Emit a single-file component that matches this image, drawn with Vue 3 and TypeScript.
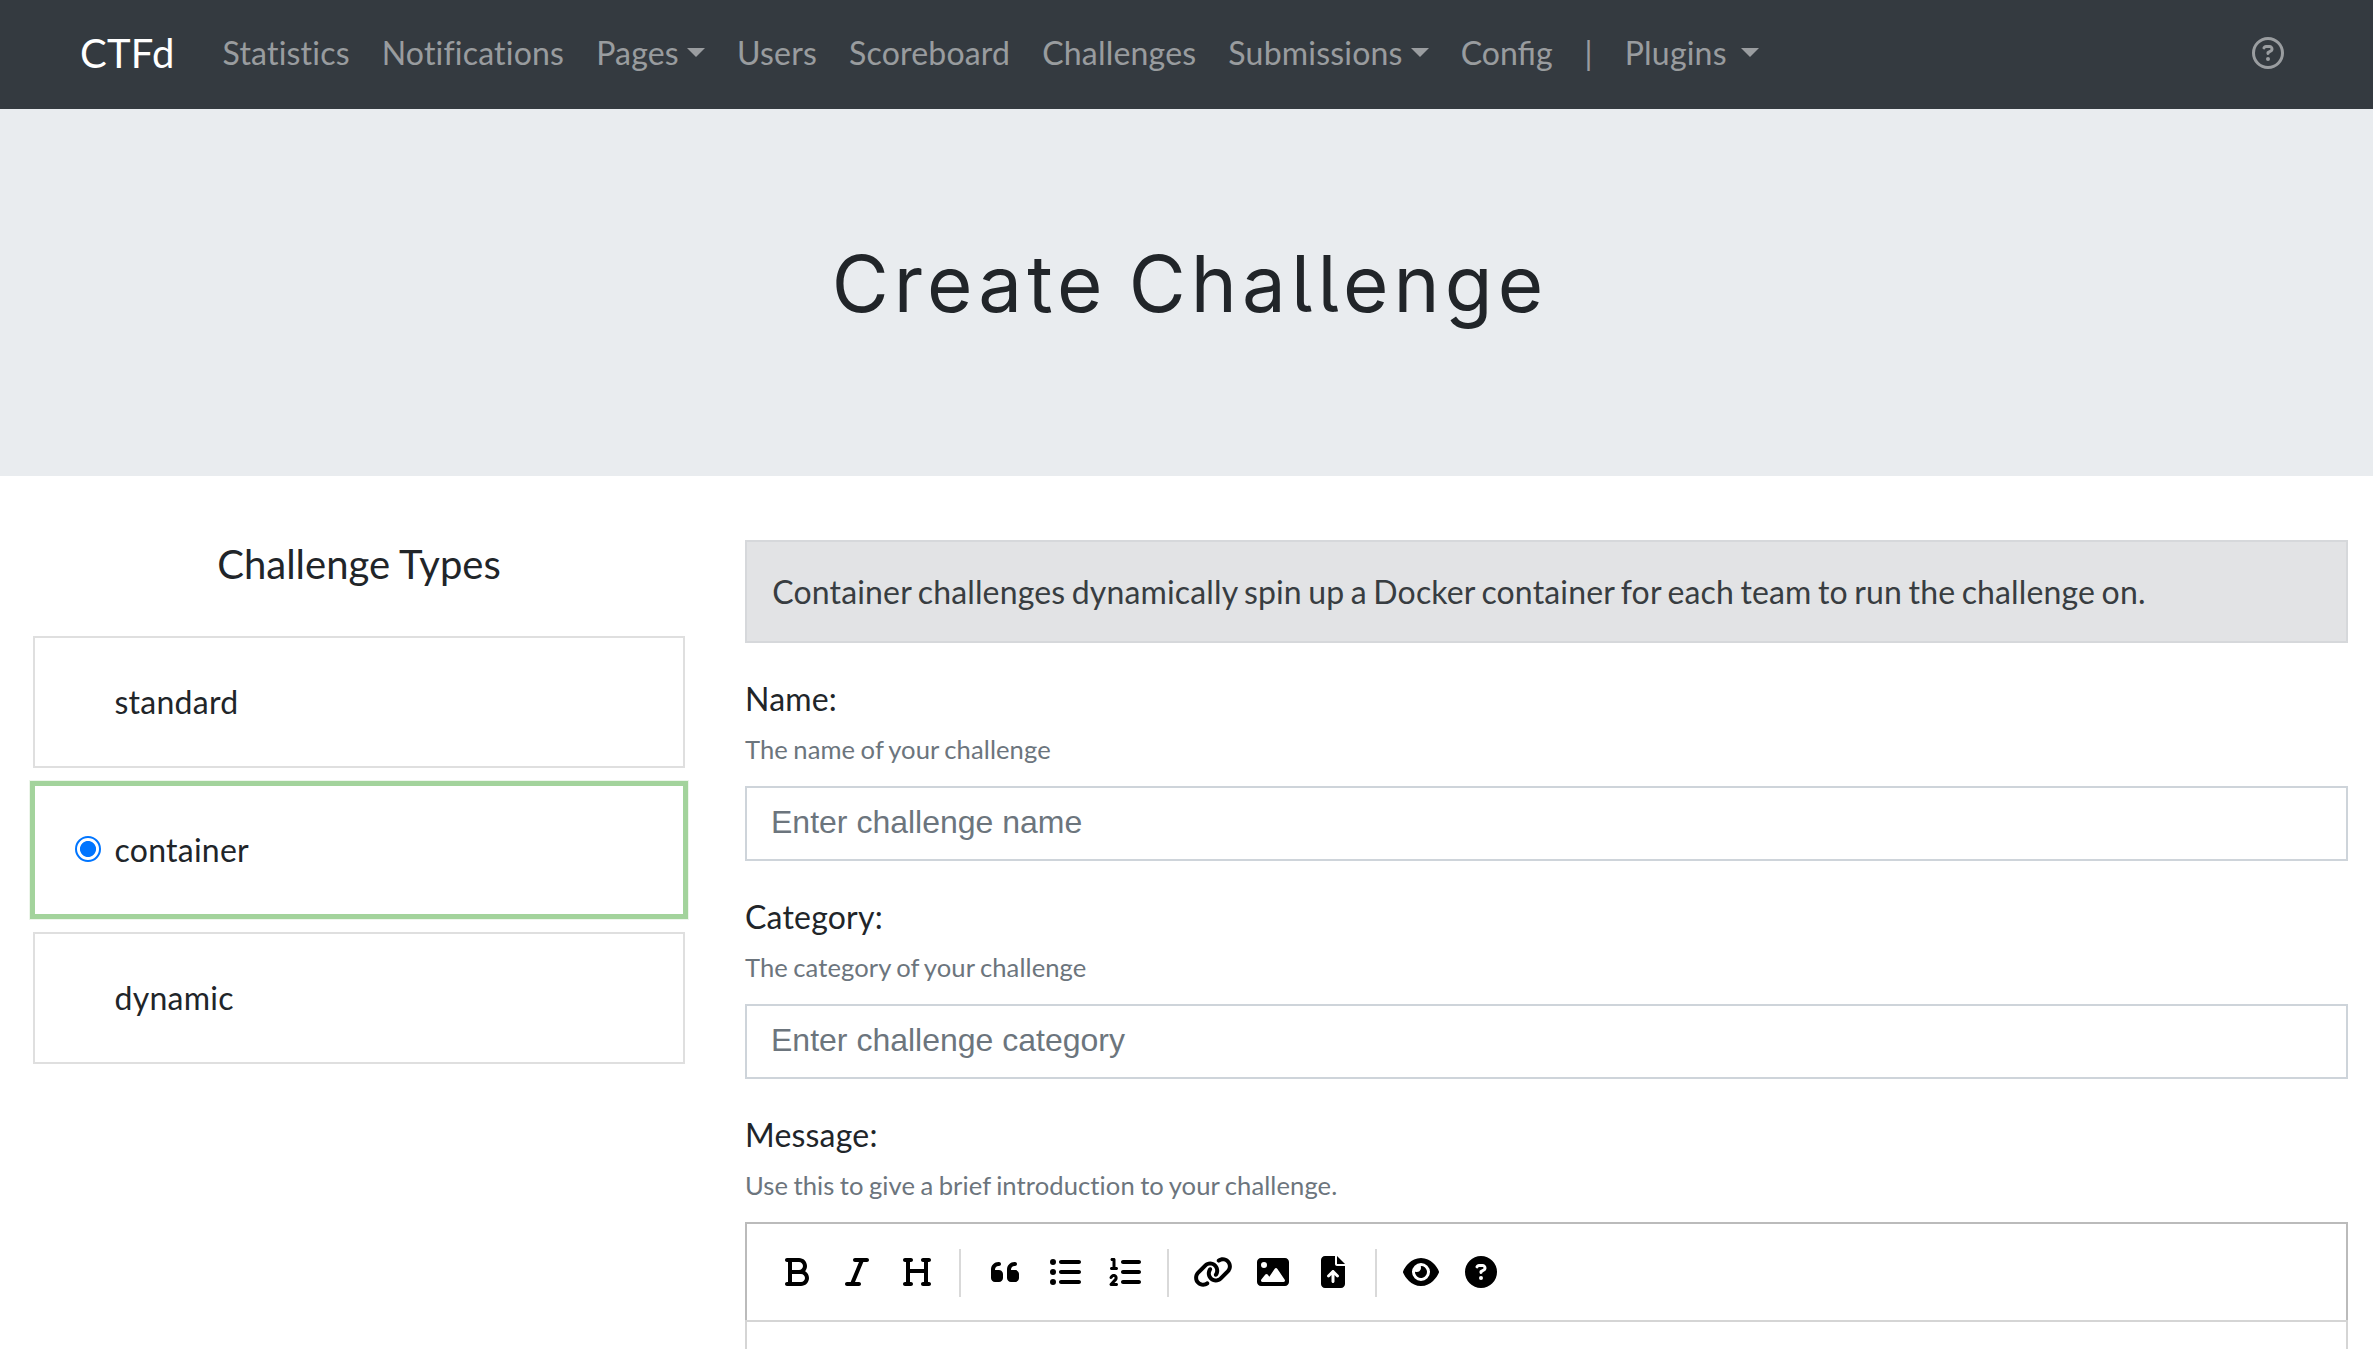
<script setup lang="ts">
import { ref } from 'vue'

interface NavItem {
  label: string
  caret?: boolean
  wide?: boolean
  tight?: boolean
}

interface Field {
  label: string
  hint: string
  placeholder: string
}

interface Tool {
  name: string
  width: number
  path: string
}

const navItems: NavItem[] = [
  { label: 'Statistics' },
  { label: 'Notifications' },
  { label: 'Pages', caret: true },
  { label: 'Users' },
  { label: 'Scoreboard' },
  { label: 'Challenges' },
  { label: 'Submissions', caret: true },
  { label: 'Config', tight: true },
  { label: '|' },
  { label: 'Plugins', caret: true, wide: true },
]

const types: string[] = ['standard', 'container', 'dynamic']
const selected = ref<string>('container')

const fields: Field[] = [
  { label: 'Name:', hint: 'The name of your challenge', placeholder: 'Enter challenge name' },
  { label: 'Category:', hint: 'The category of your challenge', placeholder: 'Enter challenge category' },
]

const question =
  'M169.8 165.3c7.9-22.3 29.1-37.3 52.8-37.3h58.3c34.9 0 63.1 28.3 63.1 63.1c0 22.6-12.1 43.5-31.7 54.8L280 264.4c-.2 13-10.9 23.6-24 23.6c-13.3 0-24-10.7-24-24V250.5c0-8.6 4.6-16.5 12.1-20.8l44.3-25.4c4.7-2.7 7.6-7.7 7.6-13.1c0-8.4-6.8-15.1-15.1-15.1H222.6c-3.4 0-6.4 2.1-7.5 5.3l-.4 1.2c-4.4 12.5-18.2 19-30.6 14.6s-19-18.2-14.6-30.6l.4-1.2zM224 352a32 32 0 1 1 64 0 32 32 0 1 1 -64 0z'

const toolGroups: Tool[][] = [
  [
    { name: 'bold', width: 384, path: 'M0 64C0 46.3 14.3 32 32 32H80 96 224c70.7 0 128 57.3 128 128c0 31.3-11.3 60.1-30 82.3c37.1 22.4 62 63.1 62 109.7c0 70.7-57.3 128-128 128H96 80 32c-17.7 0-32-14.3-32-32s14.3-32 32-32H48V256 96H32C14.3 96 0 81.7 0 64zM224 224c35.3 0 64-28.7 64-64s-28.7-64-64-64H112V224H224zM112 288V416H256c35.3 0 64-28.7 64-64s-28.7-64-64-64H224 112z' },
    { name: 'italic', width: 384, path: 'M128 64c0-17.7 14.3-32 32-32H352c17.7 0 32 14.3 32 32s-14.3 32-32 32H293.3L160 416h64c17.7 0 32 14.3 32 32s-14.3 32-32 32H32c-17.7 0-32-14.3-32-32s14.3-32 32-32H90.7L224 96H160c-17.7 0-32-14.3-32-32z' },
    { name: 'heading', width: 448, path: 'M0 64C0 46.3 14.3 32 32 32H80h48c17.7 0 32 14.3 32 32s-14.3 32-32 32H112V208H336V96H320c-17.7 0-32-14.3-32-32s14.3-32 32-32h48 48c17.7 0 32 14.3 32 32s-14.3 32-32 32H400V240 416h16c17.7 0 32 14.3 32 32s-14.3 32-32 32H368 320c-17.7 0-32-14.3-32-32s14.3-32 32-32h16V272H112V416h16c17.7 0 32 14.3 32 32s-14.3 32-32 32H80 32c-17.7 0-32-14.3-32-32s14.3-32 32-32H48V240 96H32C14.3 96 0 81.7 0 64z' },
  ],
  [
    { name: 'quote', width: 448, path: 'M0 216C0 149.7 53.7 96 120 96h8c17.7 0 32 14.3 32 32s-14.3 32-32 32h-8c-30.9 0-56 25.1-56 56v8h64c35.3 0 64 28.7 64 64v64c0 35.3-28.7 64-64 64H64c-35.3 0-64-28.7-64-64V320 288 216zm256 0c0-66.3 53.7-120 120-120h8c17.7 0 32 14.3 32 32s-14.3 32-32 32h-8c-30.9 0-56 25.1-56 56v8h64c35.3 0 64 28.7 64 64v64c0 35.3-28.7 64-64 64H320c-35.3 0-64-28.7-64-64V320 288 216z' },
    { name: 'bulleted list', width: 512, path: 'M64 144a48 48 0 1 0 0-96 48 48 0 1 0 0 96zM192 64c-17.7 0-32 14.3-32 32s14.3 32 32 32H480c17.7 0 32-14.3 32-32s-14.3-32-32-32H192zm0 160c-17.7 0-32 14.3-32 32s14.3 32 32 32H480c17.7 0 32-14.3 32-32s-14.3-32-32-32H192zm0 160c-17.7 0-32 14.3-32 32s14.3 32 32 32H480c17.7 0 32-14.3 32-32s-14.3-32-32-32H192zM64 464a48 48 0 1 0 0-96 48 48 0 1 0 0 96zm48-208a48 48 0 1 0 -96 0 48 48 0 1 0 96 0z' },
    { name: 'numbered list', width: 512, path: 'M24 56c0-13.3 10.7-24 24-24H80c13.3 0 24 10.7 24 24V176h16c13.3 0 24 10.7 24 24s-10.7 24-24 24H40c-13.3 0-24-10.7-24-24s10.7-24 24-24H56V80H48C34.7 80 24 69.3 24 56zM86.7 341.2c-6.5-7.4-18.3-6.9-24 1.2L51.5 357.9c-7.7 10.8-22.7 13.3-33.5 5.6s-13.3-22.7-5.6-33.5l11.1-15.6c23.7-33.2 72.3-35.6 99.2-4.9c21.3 24.4 20.8 60.9-1.1 84.7L86.8 432H120c13.3 0 24 10.7 24 24s-10.7 24-24 24H32c-9.5 0-18.2-5.6-22-14.4s-2.1-18.9 4.3-25.9l72-78c5.3-5.8 5.4-14.6 .3-20.5zM224 64H480c17.7 0 32 14.3 32 32s-14.3 32-32 32H224c-17.7 0-32-14.3-32-32s14.3-32 32-32zm0 160H480c17.7 0 32 14.3 32 32s-14.3 32-32 32H224c-17.7 0-32-14.3-32-32s14.3-32 32-32zm0 160H480c17.7 0 32 14.3 32 32s-14.3 32-32 32H224c-17.7 0-32-14.3-32-32s14.3-32 32-32z' },
  ],
  [
    { name: 'link', width: 640, path: 'M579.8 267.7c56.5-56.5 56.5-148 0-204.5c-50-50-128.8-56.5-186.3-15.4l-1.6 1.1c-14.4 10.3-17.7 30.3-7.4 44.6s30.3 17.7 44.6 7.4l1.6-1.1c32.1-22.9 76-19.3 103.8 8.6c31.5 31.5 31.5 82.5 0 114L422.3 334.8c-31.5 31.5-82.5 31.5-114 0c-27.9-27.9-31.5-71.8-8.6-103.8l1.1-1.6c10.3-14.4 6.9-34.4-7.4-44.6s-34.4-6.9-44.6 7.4l-1.1 1.6C206.5 251.2 213 330 263 380c56.5 56.5 148 56.5 204.5 0L579.8 267.7zM60.2 244.3c-56.5 56.5-56.5 148 0 204.5c50 50 128.8 56.5 186.3 15.4l1.6-1.1c14.4-10.3 17.7-30.3 7.4-44.6s-30.3-17.7-44.6-7.4l-1.6 1.1c-32.1 22.9-76 19.3-103.8-8.6C74 372 74 321 105.5 289.5L217.7 177.2c31.5-31.5 82.5-31.5 114 0c27.9 27.9 31.5 71.8 8.6 103.9l-1.1 1.6c-10.3 14.4-6.9 34.4 7.4 44.6s34.4 6.9 44.6-7.4l1.1-1.6C433.5 260.8 427 182 377 132c-56.5-56.5-148-56.5-204.5 0L60.2 244.3z' },
    { name: 'image', width: 512, path: 'M0 96C0 60.7 28.7 32 64 32H448c35.3 0 64 28.7 64 64V416c0 35.3-28.7 64-64 64H64c-35.3 0-64-28.7-64-64V96zM323.8 202.5c-4.5-6.6-11.9-10.5-19.8-10.5s-15.4 3.9-19.8 10.5l-87 127.6L170.7 297c-4.6-5.7-11.5-9-18.7-9s-14.2 3.3-18.7 9l-64 80c-5.8 7.2-6.9 17.1-2.9 25.4s12.4 13.6 21.6 13.6h96 32H424c8.9 0 17.1-4.9 21.2-12.8s3.6-17.4-1.4-24.7l-120-176zM112 192a48 48 0 1 0 0-96 48 48 0 1 0 0 96z' },
    { name: 'upload file', width: 384, path: 'M64 0C28.7 0 0 28.7 0 64V448c0 35.3 28.7 64 64 64H320c35.3 0 64-28.7 64-64V160H256c-17.7 0-32-14.3-32-32V0H64zM256 0V128H384L256 0zM216 408c0 13.3-10.7 24-24 24s-24-10.7-24-24V305.9l-31 31c-9.4 9.4-24.6 9.4-33.9 0s-9.4-24.6 0-33.9l72-72c9.4-9.4 24.6-9.4 33.9 0l72 72c9.4 9.4 9.4 24.6 0 33.9s-24.6 9.4-33.9 0l-31-31V408z' },
  ],
  [
    { name: 'preview', width: 576, path: 'M288 32c-80.8 0-145.5 36.8-192.6 80.6C48.6 156 17.3 208 2.5 243.7c-3.3 7.9-3.3 16.7 0 24.6C17.3 304 48.6 356 95.4 399.4C142.5 443.2 207.2 480 288 480s145.5-36.8 192.6-80.6c46.8-43.5 78.1-95.4 93-131.1c3.3-7.9 3.3-16.7 0-24.6c-14.9-35.7-46.2-87.7-93-131.1C433.5 68.8 368.8 32 288 32zM144 256a144 144 0 1 1 288 0 144 144 0 1 1 -288 0zm144-64c0 35.3-28.7 64-64 64c-7.1 0-13.9-1.2-20.3-3.3c-5.5-1.8-11.9 1.6-11.7 7.4c.3 6.9 1.3 13.8 3.2 20.7c13.7 51.2 66.4 81.6 117.6 67.9s81.6-66.4 67.9-117.6c-11.1-41.5-47.8-69.4-88.6-71.1c-5.8-.2-9.2 6.1-7.4 11.7c2.1 6.4 3.3 13.2 3.3 20.3z' },
    { name: 'guide', width: 512, path: 'M256 512A256 256 0 1 0 256 0a256 256 0 1 0 0 512z' + question },
  ],
]
</script>

<template>
  <div class="page">
    <header class="navbar">
      <a class="brand">CTFd</a>
      <nav class="nav">
        <a v-for="item in navItems" :key="item.label" class="nav-link" :class="{ tight: item.tight }">
          {{ item.label }}<span v-if="item.caret" class="caret" :class="{ wide: item.wide }"></span>
        </a>
      </nav>
      <svg class="help" viewBox="0 0 512 512" aria-label="Help">
        <path :d="'M464 256A208 208 0 1 0 48 256a208 208 0 1 0 416 0zM0 256a256 256 0 1 1 512 0A256 256 0 1 1 0 256z' + question" />
      </svg>
    </header>

    <section class="jumbotron">
      <h1>Create Challenge</h1>
    </section>

    <main class="content">
      <aside class="sidebar">
        <h2>Challenge Types</h2>
        <label v-for="type in types" :key="type" class="type" :class="{ active: type === selected }">
          <input v-model="selected" type="radio" name="type" :value="type" class="radio" />
          <span>{{ type }}</span>
        </label>
      </aside>

      <form class="form">
        <div class="alert">
          Container challenges dynamically spin up a Docker container for each team to run the challenge on.
        </div>
        <div v-for="field in fields" :key="field.label" class="group">
          <label class="label">{{ field.label }}</label>
          <small class="hint">{{ field.hint }}</small>
          <input class="input" type="text" :placeholder="field.placeholder" />
        </div>
        <div class="group">
          <label class="label">Message:</label>
          <small class="hint">Use this to give a brief introduction to your challenge.</small>
          <div class="toolbar">
            <div v-for="(group, g) in toolGroups" :key="g" class="tool-group">
              <button v-for="tool in group" :key="tool.name" type="button" class="tool" :aria-label="tool.name">
                <svg :viewBox="`0 0 ${tool.width} 512`" :width="tool.width / 16" height="32">
                  <path :d="tool.path" />
                </svg>
              </button>
            </div>
          </div>
          <div class="editor"></div>
        </div>
      </form>
    </main>
  </div>
</template>

<style>
body {
  background: #fff;
  overflow: hidden;
}
</style>

<style scoped>
.page {
  height: 1349px;
  overflow: hidden;
  font-family: Lato, "Open Sans", sans-serif;
  font-size: 32px;
  line-height: 48px;
  color: #212529;
}

.navbar {
  box-sizing: border-box;
  height: 109px;
  display: flex;
  align-items: center;
  padding: 0 89px 3px 80px;
  background: #343a40;
}

.brand {
  font-size: 40px;
  letter-spacing: 0.25px;
  color: #fff;
  margin-right: 32px;
}

.nav {
  display: flex;
  flex: 1;
}

.nav-link {
  padding: 0 16px;
  letter-spacing: 0.2px;
  color: rgba(255, 255, 255, 0.5);
  white-space: nowrap;
}

.nav-link.tight {
  letter-spacing: 0;
}

.caret {
  display: inline-block;
  margin-left: 8.2px;
  vertical-align: 8.2px;
  border-top: 9.6px solid;
  border-left: 9.6px solid transparent;
  border-right: 9.6px solid transparent;
}

.caret.wide {
  margin-left: 14px;
}

.help {
  width: 32px;
  height: 32px;
  fill: rgba(255, 255, 255, 0.5);
}

.jumbotron {
  box-sizing: border-box;
  height: 367px;
  padding: 127px 0 0 7px;
  background: #e9ecef;
  text-align: center;
}

h1 {
  margin: 0;
  font-family: Inter, sans-serif;
  font-size: 78px;
  font-weight: 430;
  line-height: 96px;
  letter-spacing: 5.1px;
  word-spacing: -6px;
  font-feature-settings: "cv05";
}

.content {
  display: flex;
  padding: 64px 25px 0 33px;
}

.sidebar {
  width: 652px;
  margin-right: 60px;
}

h2 {
  margin: 0 0 48px;
  font-size: 40px;
  font-weight: 400;
  line-height: 48px;
  text-align: center;
}

.type {
  box-sizing: border-box;
  display: flex;
  height: 132px;
  margin-bottom: 16px;
  padding: 39.5px 40px 0;
  border: 2px solid #dfdfdf;
  letter-spacing: 0.25px;
}

.type.active {
  border-color: #a3d39c;
  box-shadow: 0 0 0 3px #a3d39c, 0 0 0 4px rgba(163, 211, 156, 0.2);
}

.radio {
  appearance: none;
  box-sizing: border-box;
  width: 26px;
  height: 26px;
  margin: 10px 13.5px 0 0;
  border: 2px solid #0075ff;
  border-radius: 50%;
  background: radial-gradient(circle, #0075ff 7.6px, #fff 8.4px);
  visibility: hidden;
}

.active .radio {
  visibility: visible;
}

.form {
  flex: 1;
}

.alert {
  margin-bottom: 32px;
  padding: 25.5px 24px 25.5px 25.3px;
  border: 2px solid #d6d8db;
  background: #e2e3e5;
  color: #383d41;
  letter-spacing: 0.15px;
  word-spacing: -1.9px;
}

.group {
  margin-bottom: 32px;
}

.label,
.hint {
  display: block;
}

.label {
  letter-spacing: 0.2px;
}

.hint {
  margin: 6.6px 0 17.6px;
  font-size: 25.6px;
  line-height: 38.4px;
  letter-spacing: 0.08px;
  word-spacing: -1.25px;
  color: #6c757d;
}

.input {
  display: block;
  box-sizing: border-box;
  width: 100%;
  height: 75.6px;
  padding: 0 24px 2px;
  border: 2px solid #ced4da;
  border-radius: 0;
  background: #fff;
  font-family: "Liberation Sans", Arial, sans-serif;
  font-size: 32px;
  outline: none;
}

.input::placeholder {
  color: #6c757d;
  opacity: 1;
}

.toolbar {
  display: flex;
  box-sizing: border-box;
  height: 98px;
  padding: 18px 20px 0;
  border: 2px solid #bbb;
  border-bottom: 0;
}

.tool-group {
  display: flex;
}

.tool-group + .tool-group::before {
  content: "";
  width: 2px;
  height: 48px;
  margin: 7px 14px 0 12px;
  background: #d9d9d9;
}

.tool {
  display: flex;
  align-items: center;
  justify-content: center;
  width: 60px;
  height: 60px;
  padding: 0;
  border: 0;
  background: none;
  color: #000;
}

.tool svg {
  flex: none;
  fill: #000;
}

.editor {
  height: 120px;
  border: 2px solid #d5d5d5;
}
</style>
